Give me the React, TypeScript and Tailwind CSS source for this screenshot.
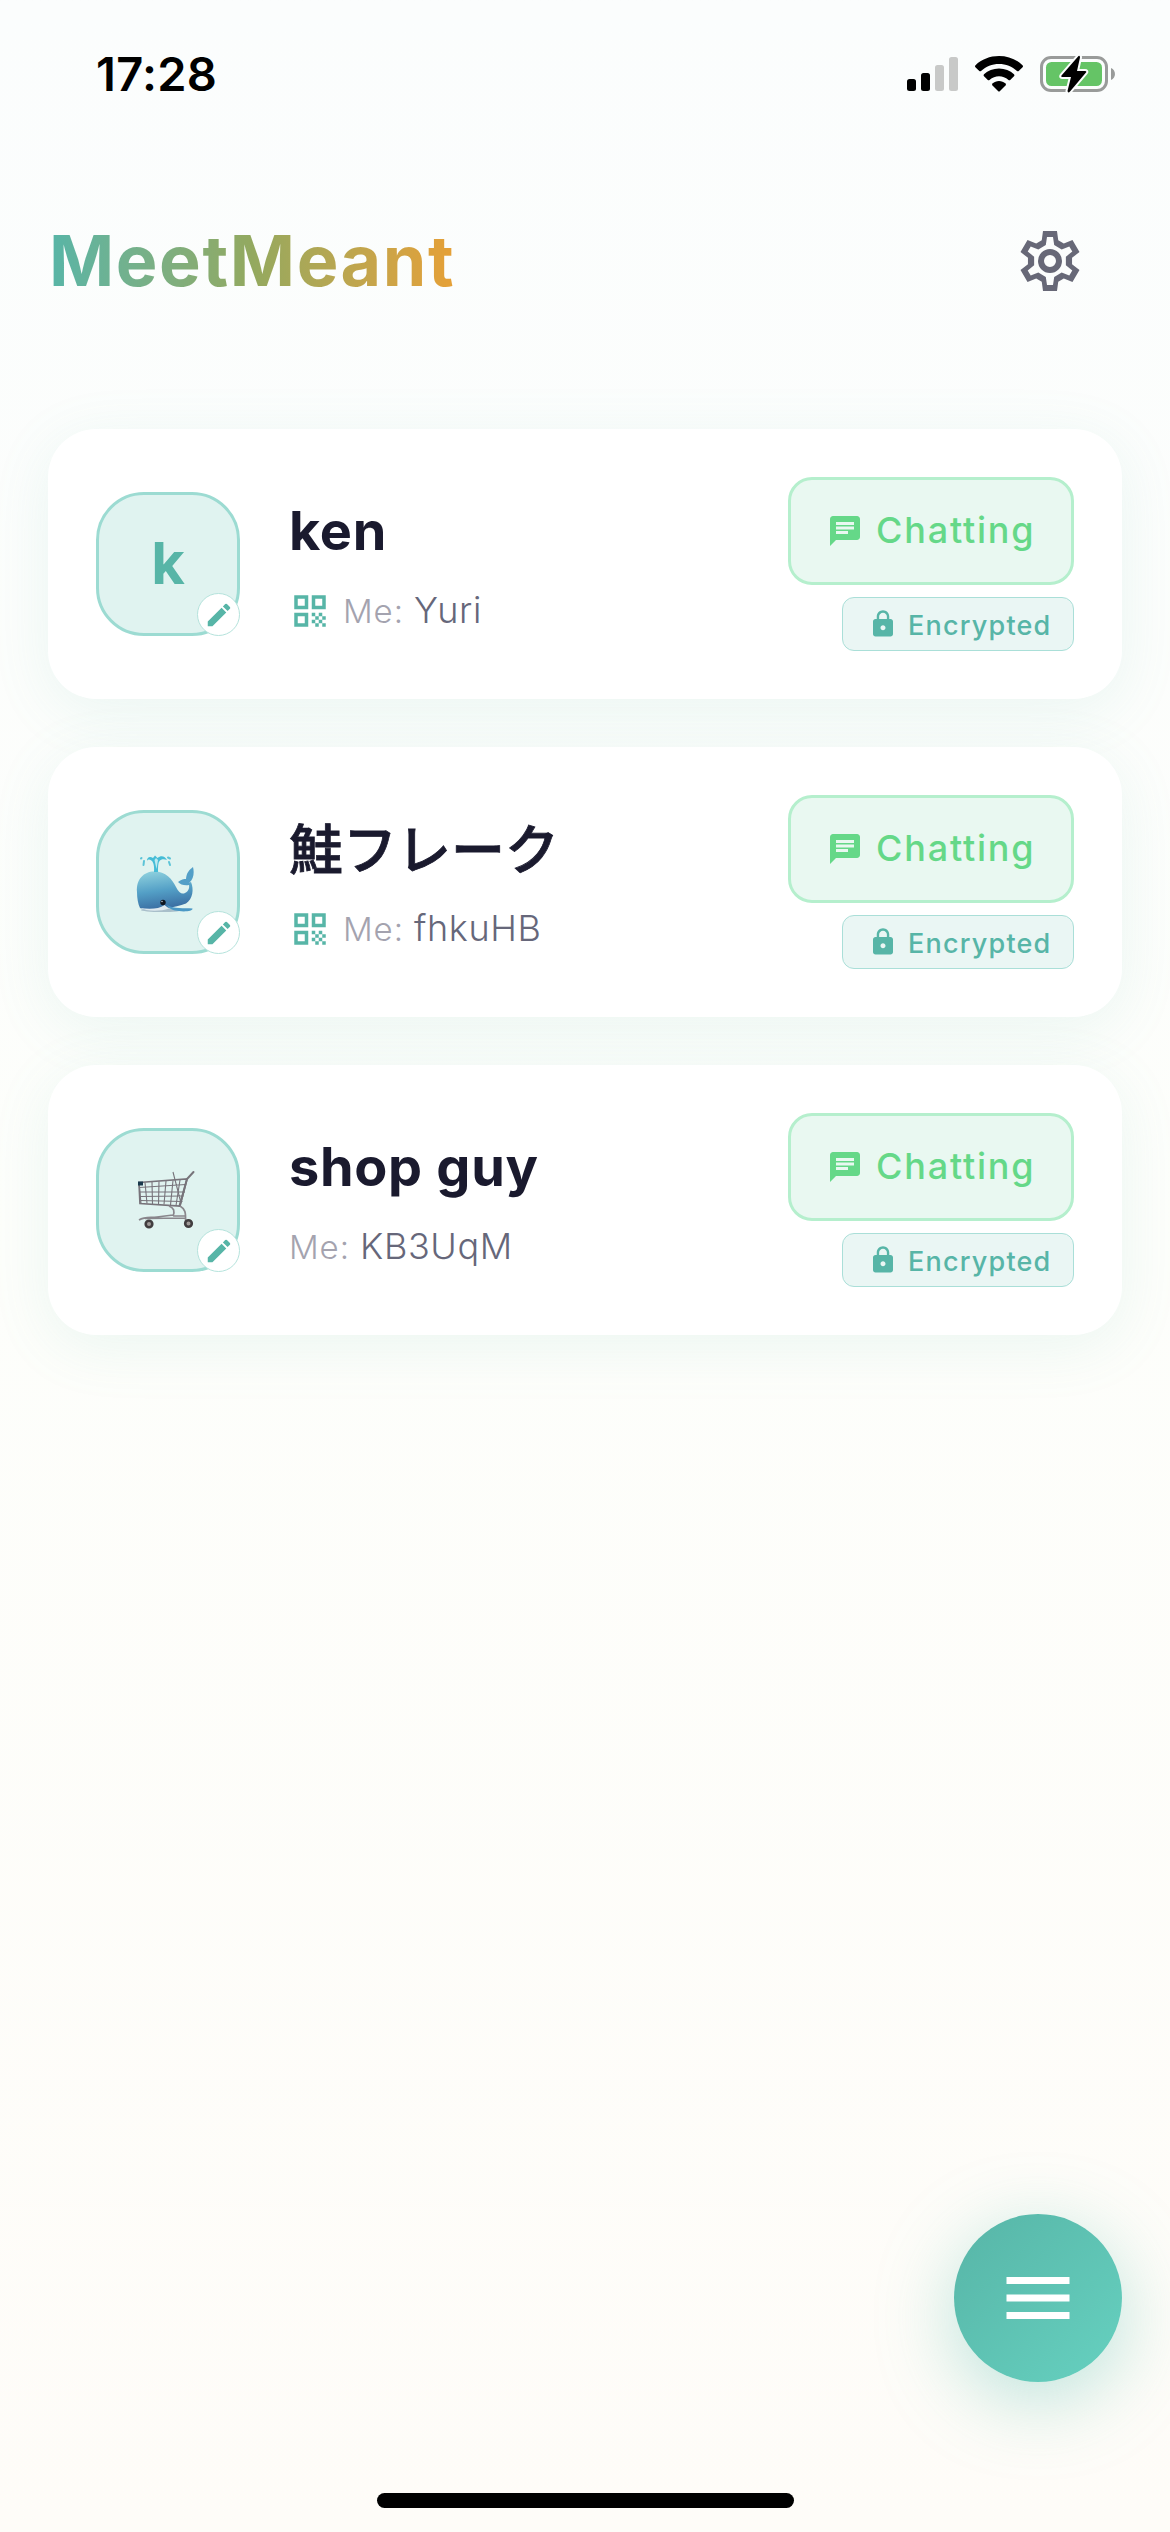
import React from 'react';
import { MdChat, MdEdit, MdLock, MdMenu, MdQrCode } from 'react-icons/md';

interface Contact {
    id: number;
    name: string;
    me: string;
    avatar: React.ReactNode;
    hasQr?: boolean;
    cjk?: boolean;
}

function WhaleIcon() {
    return (
        <svg width="58" height="60" viewBox="0 0 58 60" className="mt-[3px] mr-1.5">
            <defs>
                <linearGradient id="whaleBody" x1="0.3" y1="0" x2="0.5" y2="1">
                    <stop offset="0" stopColor="#8ccfdd" />
                    <stop offset="0.5" stopColor="#539fc6" />
                    <stop offset="1" stopColor="#38699f" />
                </linearGradient>
            </defs>
            <ellipse cx="26" cy="56" rx="21" ry="2" fill="#a9bfca" />
            <path d="M1 38C0 25 8 17.500 18 17.500C30 17.500 36 25 40 33C43 39 46 40.500 49 39C53 37 54 33 52.500 29L55 28C58 35 57 45 50 49.500C44 52 38 53 31 54C24 56.500 9 57 4 54C2 50 1 44 1 38Z" fill="url(#whaleBody)" />
            <path d="M53 31C49 32 44 30.500 42 28C45 25.500 48 25 50 25C50.500 19 53 16 57 13C58.500 19 57.500 25 53.500 28.500Z" fill="#539fc8" />
            <path d="M4 54C14 55.500 23 55 28.500 51L33 54.500C25 57.500 10 57.500 4 54Z" fill="#dfe9ef" />
            <path d="M31 51C38 55 48 54 56.500 54.500C57 57 49 58 43 57C37 56.500 33 55 31 51Z" fill="#4b98c5" />
            <circle cx="27" cy="48.500" r="2.700" fill="#10151f" />
            <circle cx="26" cy="47.500" r="0.700" fill="#dce8ee" />
            <path d="M18 18C18.500 12 17.500 9 16 7C14 5 12 5 11 7C11 3 14 2 17 4L19 1.500L21.500 4C25 1 29 2 31 6C28 4.500 25 5 23.500 7C22 9 22 13 22 18Z" fill="#45bcd6" />
            <path d="M18.500 6L20 4L22 6L20.500 15Z" fill="#bdeaf0" />
            <path d="M8 7L7.500 11M5.500 4L5 4.500M33 8L34 11M32 3.500L34 4.500" stroke="#5cc4d8" strokeWidth="2" strokeLinecap="round" />
        </svg>
    );
}

function CartIcon() {
    return (
        <svg width="58" height="60" viewBox="0 0 58 60" fill="none" stroke="#77737a" strokeWidth="1.100" className="mr-[5px]">
            {/* basket mesh */}
            <path d="M2 13L4 33M8 12.500L10 33.500M15 12L15.500 34M22 11.500L21.500 34.500M29 11L27 34.500M36 10.500L33.500 35M43 10L39 35.500" />
            <path d="M2 17.500L49 14.500M2.500 22H48M3 26.500L46.500 26M3.500 30.500L45.500 31.500M36 2L44 33" />
            <path d="M2 12.500L50 9L43 36L3 33.500Z" strokeWidth="1.700" />
            <path d="M56.500 2L50 9L42.500 36" strokeWidth="2" strokeLinecap="round" />
            {/* frame */}
            <path d="M32 36C37 38 38 41 36 46M43 36C48 39 49 42 48.500 52M36 46H48M2 50C8 46.500 14 48 20 47L36 45M8 48.500L48 48" stroke="#89868c" strokeWidth="1.700" />
            <path d="M1 11.500H6V15.500H1Z" fill="#18384c" stroke="none" />
            <g fill="#a09a98" stroke="#413d3f" strokeWidth="2.600">
                <circle cx="12" cy="54" r="3.300" />
                <circle cx="51.500" cy="53.500" r="3.300" />
            </g>
        </svg>
    );
}

function GearIcon() {
    return (
        <svg width="60" height="60" viewBox="-10 -10 20 20" fill="#676877">
            <path
                fillRule="evenodd"
                d="M-2.330-10H2.330L2.750-6.900L4.600-5.830L7.490-7.020L9.830-2.980L7.350-1.070V1.070L9.830 2.980L7.490 7.020L4.600 5.830L2.750 6.900L2.330 10H-2.330L-2.750 6.900L-4.600 5.830L-7.490 7.020L-9.830 2.980L-7.350 1.070V-1.070L-9.830-2.980L-7.490-7.020L-4.600-5.830L-2.750-6.900ZM-1-8L-1.400-5.300L-3.890-3.860L-6.430-4.870L-7.430-3.130L-5.290-1.440V1.440L-7.430 3.130L-6.430 4.870L-3.890 3.860L-1.400 5.300L-1 8H1L1.400 5.300L3.890 3.860L6.430 4.870L7.430 3.130L5.290 1.440V-1.440L7.430-3.130L6.430-4.870L3.890-3.860L1.400-5.300L1-8Z"
            />
            <circle r="3" fill="none" stroke="#676877" strokeWidth="2" />
        </svg>
    );
}

function StatusBar() {
    return (
        <div className="flex h-[141px] items-start justify-between pt-[46px] pr-[54px] pl-24 text-black">
            <span className="text-[47px] leading-[56px] font-semibold tracking-[0.3px]">17:28</span>
            <div className="flex items-center gap-[17px] pt-[9px]">
                <svg width="51" height="36" viewBox="0 0 51 36">
                    <rect x="0" y="23" width="9" height="12" rx="2.500" />
                    <rect x="14" y="17" width="9" height="18" rx="2.500" />
                    <rect x="28" y="9" width="9" height="26" rx="2.500" fill="#c8c9c8" />
                    <rect x="42" y="1" width="9" height="34" rx="2.500" fill="#c8c9c8" />
                </svg>
                <svg width="48" height="36" viewBox="0 0 48 36">
                    <path d="M24 0C33 0 41.500 3.300 47.500 9.200Q48.500 10.200 47.600 11.200L43.700 15Q42.900 15.700 42 15C37 10.500 31 8 24 8S11 10.500 6 15Q5.100 15.700 4.300 15L0.400 11.200Q-0.500 10.200 0.500 9.200C6.500 3.300 15 0 24 0Z" />
                    <path d="M24 12.500C30 12.500 35 14.700 39 18.300Q40 19.300 39 20.300L35.200 24Q34.400 24.700 33.500 24C30.500 21.500 27.500 20.300 24 20.300S17.500 21.500 14.500 24Q13.600 24.700 12.800 24L9 20.300Q8 19.300 9 18.300C13 14.700 18 12.500 24 12.500Z" />
                    <path d="M24 25C26.500 25 28.700 26 30.500 27.500Q31.500 28.500 30.500 29.500L25 35Q24 36 23 35L17.500 29.500Q16.500 28.500 17.500 27.500C19.300 26 21.500 25 24 25Z" />
                </svg>
                <svg width="76" height="38" viewBox="0 0 76 38">
                    <rect x="1.500" y="2.500" width="65" height="33" rx="9.500" fill="none" stroke="#999b9a" strokeWidth="3" />
                    <rect x="6" y="7" width="56" height="24" rx="5.500" fill="#65c466" />
                    <path d="M71 13C76.300 15 76.300 23 71 25Z" fill="#999b9a" />
                    <path d="M38.500 1L21.500 20.500Q20.500 22 22.500 22H31L27.500 36Q28 38.500 30 36.500L46 17.500Q47 16 45 16H37L40 2.500Q40 0 38.500 1Z" stroke="#fbfdfd" strokeWidth="4" paintOrder="stroke" />
                </svg>
            </div>
        </div>
    );
}

function ContactCard({ contact }: { contact: Contact }) {
    return (
        <div className="flex h-[270px] items-center rounded-[48px] bg-white px-12 shadow-[0_12px_60px_rgba(87,182,168,0.11)]">
            <div className="relative flex size-36 shrink-0 items-center justify-center rounded-[48px] border-[3px] border-[#9cdbd2] bg-[#e0f3f0]">
                {contact.avatar}
                <div className="absolute -right-[3px] -bottom-[3px] flex size-[43px] items-center justify-center rounded-full border border-[#b5e3dc] bg-white">
                    <MdEdit size={30} color="#57b5a7" />
                </div>
            </div>

            <div className="mt-1 ml-[49px] flex flex-1 flex-col">
                <h2
                    className={
                        contact.cjk
                            ? 'h-[66px] pt-0.5 text-[54px] leading-[66px] font-medium whitespace-nowrap text-[#1a1a2e] [-webkit-text-stroke:0.8px_#1a1a2e]'
                            : 'h-[66px] text-[54px] leading-[66px] font-bold tracking-[0.7px] whitespace-nowrap text-[#1a1a2e]'
                    }
                >
                    {contact.name}
                </h2>
                <div className="mt-[23px] flex h-12 items-center whitespace-nowrap">
                    {contact.hasQr && <MdQrCode size={42} color="#57b5a7" className="mr-3" />}
                    <div className="pt-1.5 leading-[48px]">
                        <span className="text-[33px] font-[350] tracking-[0.9px] text-[#a4a3af]">Me: </span>
                        <span className="text-[36px] font-[350] tracking-[0.6px] text-[#66677a]">{contact.me}</span>
                    </div>
                </div>
            </div>

            <div className="flex flex-col items-end gap-3">
                <button className="flex h-[108px] w-[286px] items-center gap-[13px] rounded-3xl border-[3px] border-[#b5efcd] bg-[#e9f8f1] pl-9 whitespace-nowrap">
                    <MdChat size={36} color="#65d888" />
                    <span className="pb-0.5 text-[36px] font-medium tracking-[1.8px] text-[#65d888]">Chatting</span>
                </button>
                <div className="flex h-[54px] w-[232px] items-center gap-[10px] rounded-xl border border-[#aadfd8] bg-[#eaf6f4] pl-[25px] whitespace-nowrap">
                    <MdLock size={30} color="#57b5a7" />
                    <span className="pt-1 text-[27px] font-[450] tracking-[1.2px] text-[#57b5a7]">Encrypted</span>
                </div>
            </div>
        </div>
    );
}

const contacts: Contact[] = [
    {
        id: 1,
        name: 'ken',
        me: 'Yuri',
        hasQr: true,
        avatar: <span className="-mt-0.5 text-[58px] leading-none font-bold text-[#57b5a7]">k</span>
    },
    { id: 2, name: '鮭フレーク', me: 'fhkuHB', hasQr: true, cjk: true, avatar: <WhaleIcon /> },
    { id: 3, name: 'shop guy', me: 'KB3UqM', avatar: <CartIcon /> }
];

export default function App() {
    return (
        <div className="flex h-[2532px] w-[1170px] flex-col overflow-hidden bg-linear-to-b from-[#fbfdfd] via-[#fdfefb] to-[#fefcf8] font-['Inter','Noto_Sans_CJK_JP',sans-serif]">
            <StatusBar />

            <header className="flex h-60 items-center justify-between pr-[90px] pl-[49px]">
                <h1 className="bg-linear-to-r from-[#57b5a7] via-[#93a95f] to-[#e6a036] bg-clip-text text-[70px] leading-[90px] font-bold tracking-[1.6px] text-transparent">
                    MeetMeant
                </h1>
                <button>
                    <GearIcon />
                </button>
            </header>

            <main className="mt-12 flex flex-1 flex-col gap-12 px-12">
                {contacts.map((contact) => (
                    <ContactCard key={contact.id} contact={contact} />
                ))}
            </main>

            {/* Menu button + home indicator */}
            <footer className="flex flex-col px-12">
                <button className="flex size-[168px] items-center justify-center self-end rounded-full bg-linear-to-br from-[#57b5a7] to-[#66d1c0] shadow-[0_18px_78px_rgba(87,190,176,0.4)]">
                    <MdMenu size={84} color="white" />
                </button>
                <div className="mt-[111px] mb-6 h-[15px] w-[417px] self-center rounded-full bg-black" />
            </footer>
        </div>
    );
}
